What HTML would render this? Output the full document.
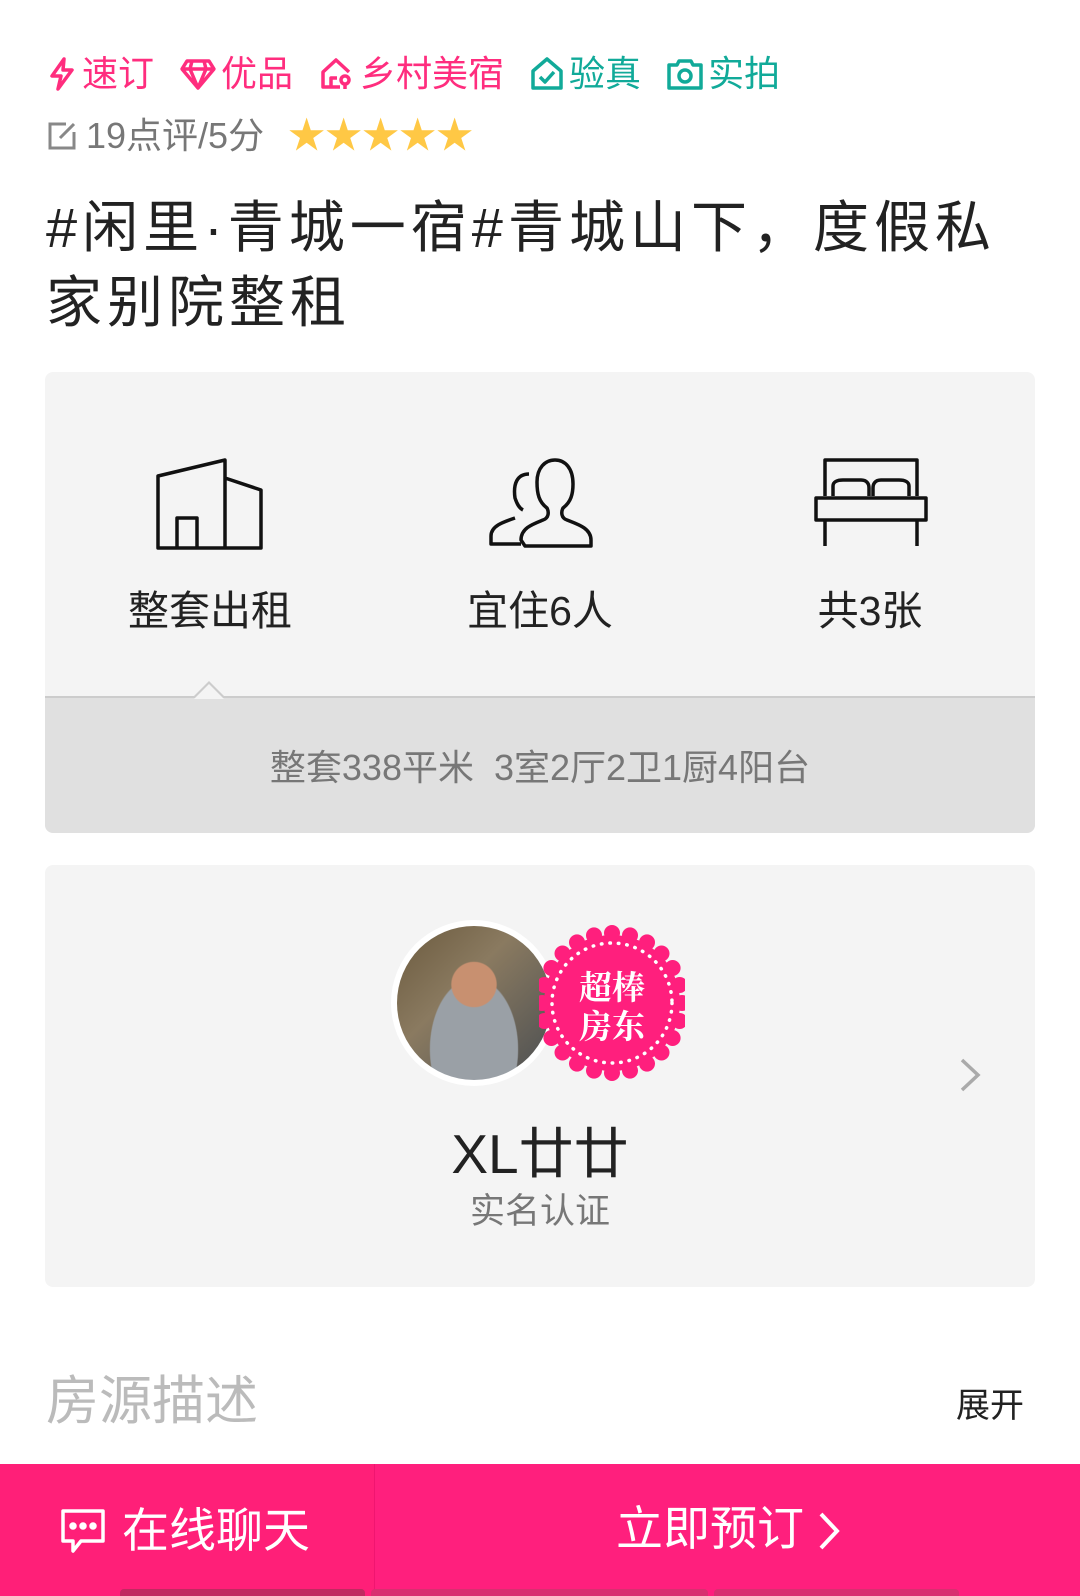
<!DOCTYPE html>
<html><head><meta charset="utf-8"><style>
*{margin:0;padding:0;box-sizing:border-box}
body{width:1080px;height:1596px;background:#fff;font-family:"Liberation Sans","Noto Sans CJK SC",sans-serif;position:relative;overflow:hidden;color:#222}
.a{position:absolute;white-space:nowrap}
.tag{display:inline-flex;align-items:center;margin-right:25px}
.tag svg{margin-right:4px}
</style></head><body>
<div class="a" style="left:46px;top:52px;font-size:36px;line-height:44px;display:flex">
<span class="tag" style="color:#ff2d7e"><svg width="32" height="36" viewBox="0 0 32 36" fill="none" stroke="#ff2d7e" stroke-width="3.5" stroke-linejoin="round"><path d="M18 3 L6 20 H15 L12 33 L26 14 H17 Z"/></svg>速订</span>
<span class="tag" style="color:#ff2d7e"><svg width="38" height="36" viewBox="0 0 38 36" fill="none" stroke="#ff2d7e" stroke-width="3.5" stroke-linejoin="round"><path d="M8 5 H30 L35 13 L19 32 L3 13 Z M3 13 H35 M13 5 L11 13 L19 32 L27 13 L25 5"/></svg>优品</span>
<span class="tag" style="color:#ff2d7e"><svg width="38" height="36" viewBox="0 0 38 36" fill="none" stroke="#ff2d7e" stroke-width="3.5" stroke-linejoin="round"><path d="M22 31 H5 V16 L18 4 L31 16 M13 31 V22 H19"/><circle cx="27" cy="24" r="4"/><path d="M27 28 V33"/></svg>乡村美宿</span>
<span class="tag" style="color:#11aa99"><svg width="36" height="36" viewBox="0 0 36 36" fill="none" stroke="#11aa99" stroke-width="3.5" stroke-linejoin="round"><path d="M4 32 V15 L18 3 L32 15 V32 Z M11 21 L16 26 L25 16"/></svg>验真</span>
<span class="tag" style="color:#11aa99"><svg width="38" height="36" viewBox="0 0 38 36" fill="none" stroke="#11aa99" stroke-width="3.5" stroke-linejoin="round"><path d="M3 9 H11 L13 5 H25 L27 9 H35 V32 H3 Z"/><circle cx="19" cy="20" r="6"/></svg>实拍</span>
</div>
<div class="a" style="left:46px;top:115px;font-size:36px;line-height:42px;color:#777;display:flex;align-items:center">
<svg width="32" height="32" viewBox="0 0 32 32" fill="none" stroke="#888" stroke-width="3"><path d="M20 4 H4 V28 H28 V12 M14 18 L28 4"/></svg>
<span style="margin-left:8px">19点评/5分</span>
<span style="margin-left:24px;color:#ffc845;font-size:37px;letter-spacing:0px">★★★★★</span>
</div>
<div class="a" style="left:46px;top:190px;font-size:56px;letter-spacing:5px;line-height:75px;color:#222;white-space:normal;width:980px">#闲里·青城一宿#青城山下，度假私家别院整租</div>

<div class="a" style="left:45px;top:372px;width:990px;height:461px;background:#f4f4f4;border-radius:8px;overflow:hidden">
 <div class="a" style="left:0;top:324px;width:990px;height:137px;background:#e0e0e0;border-top:2px solid #ccc"></div>
 <div class="a" style="left:147px;top:309px;width:0;height:0;border-left:17px solid transparent;border-right:17px solid transparent;border-bottom:17px solid #ccc"></div>
 <div class="a" style="left:149px;top:312px;width:0;height:0;border-left:15px solid transparent;border-right:15px solid transparent;border-bottom:15px solid #f4f4f4"></div>
 <svg class="a" style="left:110px;top:84px" width="110" height="96" viewBox="0 0 110 96" fill="none" stroke="#111" stroke-width="3.5" stroke-linejoin="round"><path d="M3 92 V20 L70 4 V92 Z M70 22 L106 34 V92 H70 M22 92 V62 H42 V92"/></svg>
 <svg class="a" style="left:442px;top:84px" width="106" height="96" viewBox="0 0 106 96" fill="none" stroke="#111" stroke-width="3.5" stroke-linejoin="round"><path d="M38 90 H104 V84 C104 72 90 68 80 64 C74 62 74 56 76 52 C84 46 86 38 86 28 C86 12 78 4 68 4 C58 4 50 12 50 26 C50 38 52 46 60 52 C62 56 62 62 56 64 C46 68 34 72 34 84 Z M42 18 C30 18 26 28 28 42 C30 48 32 52 36 54 M28 62 C16 66 4 70 4 80 V88 H34"/></svg>
 <svg class="a" style="left:768px;top:84px" width="116" height="96" viewBox="0 0 116 96" fill="none" stroke="#111" stroke-width="3.5" stroke-linejoin="round"><path d="M12 40 V4 H104 V40 M3 42 H113 V64 H3 Z M12 64 V90 M104 64 V90 M20 40 V30 C20 26 24 24 30 24 H48 C54 24 56 28 56 32 V40 M60 40 V32 C60 28 62 24 68 24 H86 C92 24 96 26 96 30 V40"/></svg>
 <div class="a" style="left:0;width:330px;top:214px;text-align:center;font-size:41px;line-height:50px;color:#222">整套出租</div>
 <div class="a" style="left:330px;width:330px;top:214px;text-align:center;font-size:41px;line-height:50px;color:#222">宜住6人</div>
 <div class="a" style="left:660px;width:330px;top:214px;text-align:center;font-size:41px;line-height:50px;color:#222">共3张</div>
 <div class="a" style="left:0;width:990px;top:373px;text-align:center;font-size:36px;line-height:46px;color:#777">整套338平米&nbsp;&nbsp;3室2厅2卫1厨4阳台</div>
</div>

<div class="a" style="left:45px;top:865px;width:990px;height:422px;background:#f4f4f4;border-radius:8px">
 <div class="a" style="left:346px;top:55px;width:166px;height:166px;border-radius:50%;background:#fff;padding:6px">
  <div style="width:154px;height:154px;border-radius:50%;background:radial-gradient(circle at 50% 38%,#c89070 0 18%,transparent 19%),radial-gradient(ellipse at 50% 80%,#9aa0a6 0 40%,transparent 41%),linear-gradient(135deg,#6b5a3e,#8a7a60 40%,#4a4e52)"></div>
 </div>
 <svg class="a" style="left:494px;top:60px" width="146" height="156" viewBox="0 0 146 156">
  <g fill="#ff1f7d"><circle cx="73" cy="78" r="68"/>
  <g><circle cx="73" cy="8" r="8"/><circle cx="91" cy="10.4" r="8"/><circle cx="108" cy="17.4" r="8"/><circle cx="122.5" cy="28.5" r="8"/><circle cx="133.6" cy="43" r="8"/><circle cx="140.6" cy="60" r="8"/><circle cx="143" cy="78" r="8"/><circle cx="140.6" cy="96" r="8"/><circle cx="133.6" cy="113" r="8"/><circle cx="122.5" cy="127.5" r="8"/><circle cx="108" cy="138.6" r="8"/><circle cx="91" cy="145.6" r="8"/><circle cx="73" cy="148" r="8"/><circle cx="55" cy="145.6" r="8"/><circle cx="38" cy="138.6" r="8"/><circle cx="23.5" cy="127.5" r="8"/><circle cx="12.4" cy="113" r="8"/><circle cx="5.4" cy="96" r="8"/><circle cx="3" cy="78" r="8"/><circle cx="5.4" cy="60" r="8"/><circle cx="12.4" cy="43" r="8"/><circle cx="23.5" cy="28.5" r="8"/><circle cx="38" cy="17.4" r="8"/><circle cx="55" cy="10.4" r="8"/></g></g>
  <circle cx="73" cy="78" r="60" fill="none" stroke="#fff" stroke-width="3.5" stroke-dasharray="0.5 8" stroke-linecap="round"/>
  <text x="73" y="74" text-anchor="middle" font-family="Noto Serif CJK SC,serif" font-weight="bold" font-size="33" fill="#fff">超棒</text>
  <text x="73" y="113" text-anchor="middle" font-family="Noto Serif CJK SC,serif" font-weight="bold" font-size="33" fill="#fff">房东</text>
 </svg>
 <svg class="a" style="left:914px;top:192px" width="22" height="36" viewBox="0 0 22 36" fill="none" stroke="#aaa" stroke-width="3.5"><path d="M3 3 L19 18 L3 33"/></svg>
 <div class="a" style="left:0;width:990px;top:258px;text-align:center;font-size:55px;line-height:62px;color:#222">XL廿廿</div>
 <div class="a" style="left:0;width:990px;top:325px;text-align:center;font-size:35px;line-height:44px;color:#777">实名认证</div>
</div>

<div class="a" style="left:46px;top:1371px;font-size:53px;line-height:62px;color:#bbb">房源描述</div>
<div class="a" style="right:56px;top:1385px;font-size:34px;line-height:42px;color:#222">展开</div>

<div class="a" style="left:0;top:1464px;width:375px;height:132px;background:#ff1f78;border-right:1px solid #f01570"></div>
<div class="a" style="left:375px;top:1464px;width:705px;height:132px;background:#ff1f7d"></div>
<svg class="a" style="left:59px;top:1507px" width="48" height="48" viewBox="0 0 48 48" fill="none" stroke="#fff" stroke-width="3.5" stroke-linejoin="round"><path d="M4 4 H44 V34 H22 L14 44 V34 H4 Z"/><circle cx="14" cy="19" r="2" fill="#fff"/><circle cx="24" cy="19" r="2" fill="#fff"/><circle cx="34" cy="19" r="2" fill="#fff"/></svg>
<div class="a" style="left:122px;top:1503px;font-size:47px;line-height:56px;color:#fff">在线聊天</div>
<div class="a" style="left:616px;top:1501px;font-size:47px;line-height:56px;color:#fff">立即预订</div>
<svg class="a" style="left:817px;top:1511px" width="24" height="40" viewBox="0 0 24 40" fill="none" stroke="#fff" stroke-width="4"><path d="M4 3 L20 20 L4 37"/></svg>
<div class="a" style="left:120px;top:1589px;width:245px;height:7px;background:#c02a60;border-radius:4px 4px 0 0"></div>
<div class="a" style="left:371px;top:1589px;width:337px;height:7px;background:#d83070;border-radius:4px 4px 0 0"></div>
<div class="a" style="left:714px;top:1589px;width:245px;height:7px;background:#d83070;border-radius:4px 4px 0 0"></div>
</body></html>
